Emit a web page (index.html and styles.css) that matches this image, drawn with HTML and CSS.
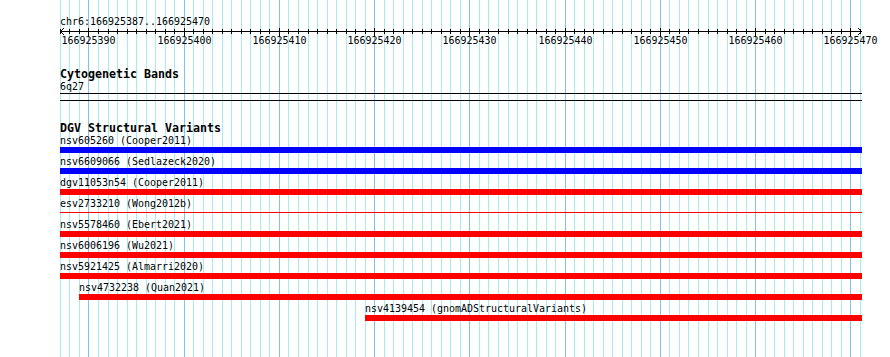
FILE: index.html
```html
<!DOCTYPE html>
<html>
<head>
	<title>chr6:166925387..166925470</title>
	<link rel="stylesheet" href="styles.css">
</head>
<body>
<div class="panel">
	<svg class="grid" id="grid" width="890" height="357"></svg>

	<div class="tracks">
		<div class="ruler">
			<div class="ruler-title">chr6:166925387..166925470</div>
			<svg class="scale" id="scale" width="890" height="20">
				<line x1="60" y1="3.5" x2="862" y2="3.5" />
				<polyline points="64,0 60.5,3.5 64,7" />
				<polyline points="858,0 861.5,3.5 858,7" />
			</svg>
		</div>

		<div class="track cyto">
			<h2 class="track-title">Cytogenetic Bands</h2>
			<div class="feature-label">6q27</div>
			<div class="band"></div>
		</div>

		<div class="track dgv">
			<h2 class="track-title">DGV Structural Variants</h2>

			<div class="feature">
				<div class="feature-label">nsv605260 (Cooper2011)</div>
				<div class="bar blue"></div>
			</div>
			<div class="feature">
				<div class="feature-label">nsv6609066 (Sedlazeck2020)</div>
				<div class="bar blue"></div>
			</div>
			<div class="feature">
				<div class="feature-label">dgv11053n54 (Cooper2011)</div>
				<div class="bar red"></div>
			</div>
			<div class="feature">
				<div class="feature-label">esv2733210 (Wong2012b)</div>
				<div class="bar thin"></div>
			</div>
			<div class="feature">
				<div class="feature-label">nsv5578460 (Ebert2021)</div>
				<div class="bar red"></div>
			</div>
			<div class="feature">
				<div class="feature-label">nsv6006196 (Wu2021)</div>
				<div class="bar red"></div>
			</div>
			<div class="feature">
				<div class="feature-label">nsv5921425 (Almarri2020)</div>
				<div class="bar red"></div>
			</div>
			<div class="feature" style="padding-left: 19px">
				<div class="feature-label">nsv4732238 (Quan2021)</div>
				<div class="bar red"></div>
			</div>
			<div class="feature" style="padding-left: 305px">
				<div class="feature-label">nsv4139454 (gnomADStructuralVariants)</div>
				<div class="bar red"></div>
			</div>
		</div>
	</div>
</div>

<script>
const NS = "http://www.w3.org/2000/svg";
const grid = document.getElementById("grid");
const scale = document.getElementById("scale");

const regionStart = 166925387;
const bases = 84;

function svgEl(name, attrs) {
	const el = document.createElementNS(NS, name);
	for (const key in attrs) {
		el.setAttribute(key, attrs[key]);
	}
	return el;
}

for (let i = 0; i <= bases; i++) {
	const pos = regionStart + i;
	const x = Math.floor(60 + i * 800 / bases + 0.4) + 0.5;
	const major = pos % 10 === 0;

	grid.appendChild(svgEl("line", {
		x1: x, y1: 0, x2: x, y2: 357,
		class: major ? "major" : "minor"
	}));

	scale.appendChild(svgEl("line", {
		x1: x, y1: major ? 0 : 1, x2: x, y2: major ? 8 : 6
	}));

	if (major) {
		const label = svgEl("text", { x: x, y: 16 });
		label.textContent = pos;
		scale.appendChild(label);
	}
}
</script>
</body>
</html>
```

FILE: styles.css
```css
* {
	margin: 0;
	padding: 0;
	box-sizing: border-box;
}

body {
	font-family: "DejaVu Sans Mono", monospace;
	font-size: 9.97px;
	line-height: 12px;
	color: #000;
	background: #fff;
}

.panel {
	position: relative;
	width: 890px;
	height: 357px;
	overflow: hidden;
}

.grid {
	position: absolute;
	top: 0;
	left: 0;
}

.grid line {
	stroke: #a6ecf2;
	stroke-width: 1;
	shape-rendering: crispEdges;
}

.grid line.major {
	stroke: #80c4ec;
}

.tracks {
	position: relative;
	padding-top: 16px;
}

.ruler-title {
	margin-left: 60px;
	height: 12px;
	white-space: nowrap;
}

.scale {
	display: block;
}

.scale line,
.scale polyline {
	stroke: #000;
	stroke-width: 1;
	fill: none;
	shape-rendering: crispEdges;
}

.scale text {
	font-family: "DejaVu Sans Mono", monospace;
	font-size: 9.97px;
	fill: #000;
	text-anchor: middle;
}

.track {
	margin-left: 60px;
	width: 802px;
}

.track-title {
	font-size: 11.63px;
	font-weight: bold;
	line-height: 14px;
	white-space: nowrap;
}

.feature-label {
	height: 12px;
	white-space: nowrap;
}

.cyto {
	margin-top: 19px;
}

.band {
	height: 8px;
	border-top: 1px solid #000;
	border-bottom: 1px solid #000;
}

.dgv {
	margin-top: 20px;
}

.feature {
	margin-bottom: 3px;
}

.bar {
	height: 6px;
}

.bar.blue {
	background-color: #0000ff;
}

.bar.red {
	background-color: #ff0000;
}

/* zero-width variant: a 1px line through the middle of the row */
.bar.thin {
	background: linear-gradient(#ff0000, #ff0000) 0 2px / 100% 1px no-repeat;
}
```
